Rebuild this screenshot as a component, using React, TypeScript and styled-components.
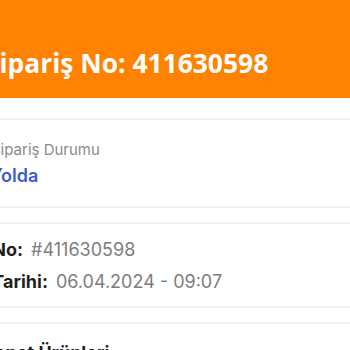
import React from "react";
import styled, { createGlobalStyle } from "styled-components";

const Global = createGlobalStyle`
  html, body { margin: 0; padding: 0; background: #ffffff; }
  body { font-family: Inter, "Noto Sans", sans-serif; }
`;

const Page = styled.div`
  width: 350px;
  height: 350px;
  overflow: hidden;
  background: #ffffff;
  display: flex;
  flex-direction: column;
`;

const Header = styled.header`
  box-sizing: border-box;
  height: 98px;
  background: #ff8200;
  padding-top: 45px;
  flex-shrink: 0;
`;

const Title = styled.h1`
  margin: 0 0 0 -15px;
  font-family: "Open Sans", sans-serif;
  font-weight: 700;
  font-size: 26.4px;
  line-height: 36px;
  color: #ffffff;
  white-space: nowrap;
`;

const Sections = styled.div`
  display: flex;
  flex-direction: column;
  gap: 14px;
  padding-top: 20px;
`;

const Card = styled.section<{ $pt: number; $pb: number; $gap: number }>`
  background: #ffffff;
  border-top: 2px solid #f0f0f0;
  border-bottom: 2px solid #f0f0f0;
  padding: ${(p) => p.$pt}px 0 ${(p) => p.$pb}px;
  display: flex;
  flex-direction: column;
  gap: ${(p) => p.$gap}px;
`;

const Line = styled.div<{ $shift: number }>`
  margin-left: ${(p) => p.$shift}px;
  white-space: nowrap;
`;

const Caption = styled(Line)`
  font-size: 15px;
  line-height: 20px;
  color: #8a8a8a;
`;

const Status = styled(Line)`
  font-size: 18px;
  line-height: 24px;
  font-weight: 600;
  color: #3a5ec6;
`;

const InfoRow = styled(Line)`
  font-size: 18px;
  line-height: 24px;
  color: #7d7d7d;
`;

const Label = styled.span`
  font-weight: 700;
  color: #1f1f1f;
  margin-right: 8px;
`;

const SectionTitle = styled(Line)`
  font-size: 18px;
  line-height: 24px;
  font-weight: 700;
  color: #1f1f1f;
`;

export default function App() {
  return (
    <>
      <Global />
      <Page>
        <Header>
          <Title>Sipariş No: 411630598</Title>
        </Header>
        <Sections>
          <Card $pt={20} $pb={18} $gap={4}>
            <Caption $shift={-9}>Sipariş Durumu</Caption>
            <Status $shift={-10}>Yolda</Status>
          </Card>
          <Card $pt={14} $pb={12} $gap={8}>
            <InfoRow $shift={-73}>
              <Label>Sipariş No:</Label>#411630598
            </InfoRow>
            <InfoRow $shift={-73}>
              <Label>Sipariş Tarihi:</Label>06.04.2024 - 09:07
            </InfoRow>
          </Card>
          <Card $pt={17} $pb={16} $gap={0}>
            <SectionTitle $shift={-17}>Sepet Ürünleri</SectionTitle>
          </Card>
        </Sections>
      </Page>
    </>
  );
}
